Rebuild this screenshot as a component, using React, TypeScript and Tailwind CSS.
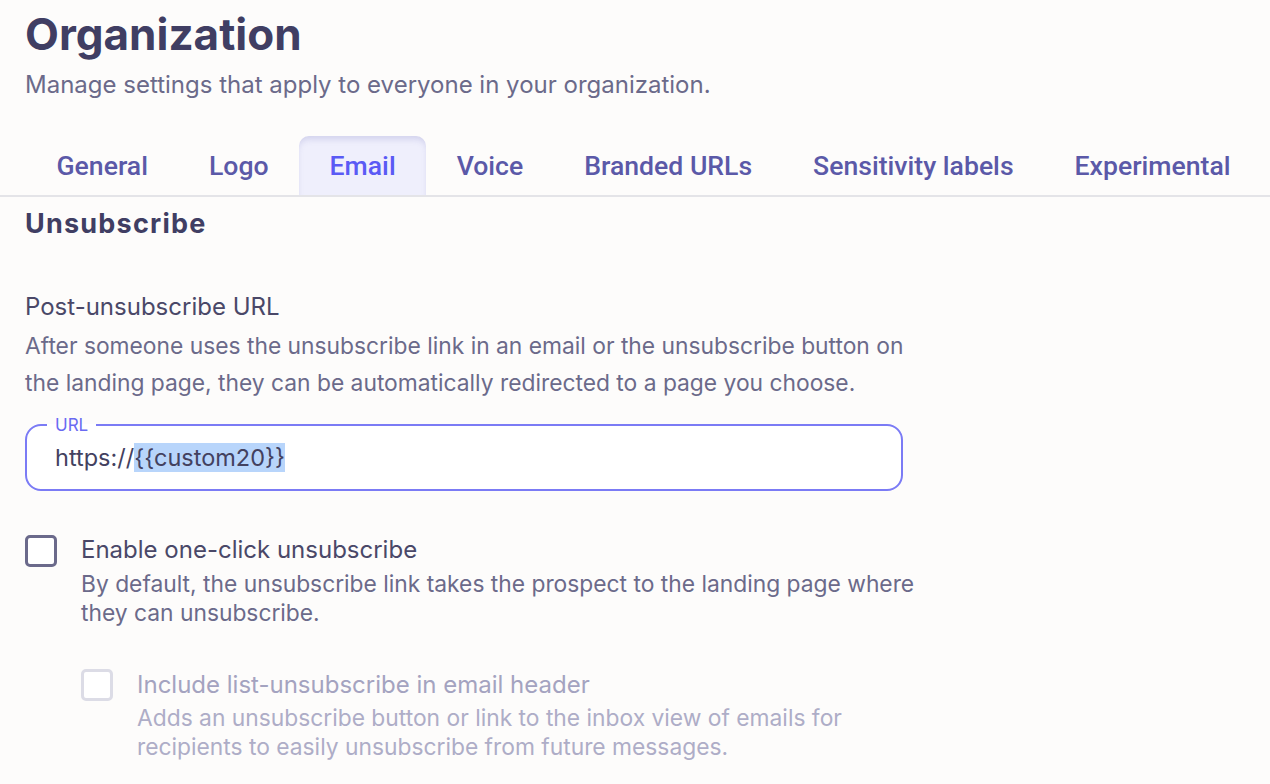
const tabs = ["General", "Logo", "Email", "Voice", "Branded URLs", "Sensitivity labels", "Experimental"];

function Checkbox({ disabled }: { disabled?: boolean }) {
  return (
    <div
      className={
        disabled
          ? "mt-[1px] w-[32px] h-[32px] shrink-0 rounded-[5px] border-[3px] border-[#dcdce6] bg-white"
          : "mt-[2px] w-[32px] h-[32px] shrink-0 rounded-[5px] border-[3px] border-[#6b6a8b] bg-white"
      }
    />
  );
}

export default function App() {
  return (
    <div className="min-h-[784px] w-[1270px] bg-[#fdfcfb] font-['Inter',sans-serif] overflow-hidden">
      <div className="px-[25px] pt-[8px]">
        <h1 className="text-[44px] leading-[52px] font-bold text-[#403e63]">Organization</h1>
        <p className="mt-[9px] text-[24px] leading-[32px] text-[#6b6a8a]">
          Manage settings that apply to everyone in your organization.
        </p>
      </div>

      <div className="mt-[35px] flex pl-[26px] border-b-2 border-[#e4e4e8]">
        {tabs.map((t) => (
          <div
            key={t}
            className={
              t === "Email"
                ? "h-[59px] px-[30.5px] shrink-0 whitespace-nowrap flex items-center rounded-t-[10px] bg-[#efeffc] shadow-[inset_0_5px_6px_-2px_rgba(120,120,190,0.25)] text-[#5a5af5] font-['Roboto',sans-serif] font-medium text-[26.6px]"
                : "h-[59px] px-[30.5px] shrink-0 whitespace-nowrap flex items-center text-[#5b59a8] font-['Roboto',sans-serif] font-medium text-[26.6px]"
            }
          >
            {t}
          </div>
        ))}
      </div>

      <div className="px-[25px]">
        <h2 className="mt-[11px] text-[27px] leading-[32px] font-bold text-[#403e63] tracking-[0.045em]">Unsubscribe</h2>

        <div className="mt-[51px] text-[24px] leading-[32px] text-[#4a4868]">Post-unsubscribe URL</div>
        <p className="mt-[4px] w-[890px] text-[22.8px] leading-[37px] text-[#6b6a8a]">
          After someone uses the unsubscribe link in an email or the unsubscribe button on the landing page, they can
          be automatically redirected to a page you choose.
        </p>

        <fieldset className="mt-[14px] w-[878px] h-[76px] rounded-[16px] border-2 border-[#7b7bf5] bg-white pl-[20px] pr-[20px]">
          <legend className="px-[8px] text-[17px] leading-[20px] text-[#6a6af2]">URL</legend>
          <div className="pl-[8px] mt-[4px] text-[23.5px] leading-[37px] text-[#43415f]">
            https://<span className="bg-[#b8d5fb]">{"{{custom20}}"}</span>
          </div>
        </fieldset>

        <div className="mt-[42px] flex gap-[24px]">
          <Checkbox />
          <div>
            <div className="text-[24px] leading-[33px] text-[#4a4868]">Enable one-click unsubscribe</div>
            <p className="mt-[3px] w-[840px] text-[22.8px] leading-[29px] text-[#6b6a8a]">
              By default, the unsubscribe link takes the prospect to the landing page where they can unsubscribe.
            </p>
          </div>
        </div>

        <div className="mt-[41px] ml-[56px] flex gap-[24px]">
          <Checkbox disabled />
          <div>
            <div className="text-[24px] leading-[33px] text-[#a4a3c0]">Include list-unsubscribe in email header</div>
            <p className="mt-[2px] w-[720px] text-[22.8px] leading-[29px] text-[#aeadc7]">
              Adds an unsubscribe button or link to the inbox view of emails for recipients to easily unsubscribe from
              future messages.
            </p>
          </div>
        </div>
      </div>
    </div>
  );
}
